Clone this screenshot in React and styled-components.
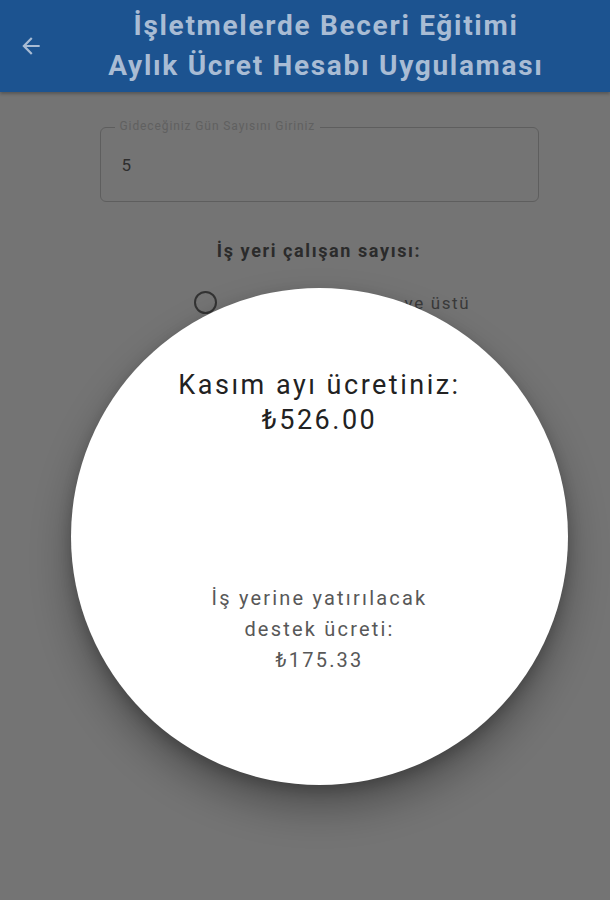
import React from "react";
import styled, { createGlobalStyle } from "styled-components";

const GlobalStyle = createGlobalStyle`
  html, body {
    margin: 0;
    padding: 0;
    background: #747474;
    font-family: Roboto, "Noto Sans", "DejaVu Sans", sans-serif;
  }
`;

const Screen = styled.div`
  position: relative;
  width: 610px;
  height: 900px;
  overflow: hidden;
  background: #747474;
`;

const AppBar = styled.header`
  display: flex;
  align-items: center;
  height: 92px;
  background: #1c5390;
  box-shadow: 0 2px 3px rgba(0, 0, 0, 0.25);
`;

const BackButton = styled.div`
  width: 56px;
  display: flex;
  justify-content: center;
  padding-left: 6px;
  box-sizing: border-box;
`;

const Title = styled.h1`
  flex: 1;
  margin: 0 14px 0 0;
  text-align: center;
  color: #a9bcd4;
  font-size: 28px;
  font-weight: 700;
  letter-spacing: 1.7px;
  line-height: 40px;
`;

const Form = styled.main`
  display: flex;
  flex-direction: column;
  align-items: center;
  padding-top: 35px;
  padding-left: 28px;
`;

const Field = styled.div`
  position: relative;
  width: 439px;
  height: 75px;
  box-sizing: border-box;
  border: 1.5px solid #5e5e5e;
  border-radius: 6px;
  display: flex;
  align-items: center;
  padding-left: 21px;
  color: #2e2e2e;
  font-size: 17px;
`;

const FieldLabel = styled.span`
  position: absolute;
  top: -9px;
  left: 14px;
  padding: 0 5px;
  background: #747474;
  color: #606060;
  font-size: 12px;
  letter-spacing: 0.9px;
  line-height: 15px;
`;

const Question = styled.p`
  margin: 38px 0 0;
  color: #2b2b2b;
  font-size: 18px;
  font-weight: 700;
  letter-spacing: 1.6px;
`;

const RadioRow = styled.label`
  display: flex;
  align-items: center;
  gap: 64px;
  margin-top: 30px;
  margin-left: 26px;
  color: #3a3a3a;
  font-size: 17px;
  letter-spacing: 1.6px;
`;

const RadioDot = styled.span`
  width: 19px;
  height: 19px;
  border: 2px solid #333;
  border-radius: 50%;
`;

const Bubble = styled.div`
  position: absolute;
  left: 71px;
  top: 288px;
  width: 497px;
  height: 497px;
  border-radius: 50%;
  background: #ffffff;
  box-shadow: 0 22px 40px rgba(0, 0, 0, 0.32), 0 6px 14px rgba(0, 0, 0, 0.2);
  display: flex;
  flex-direction: column;
  align-items: center;
  padding-top: 80px;
  box-sizing: border-box;
  text-align: center;
`;

const Amount = styled.div`
  color: #222;
  font-size: 27px;
  letter-spacing: 2.5px;
  line-height: 35px;
`;

const Support = styled.div`
  margin-top: 145px;
  color: #585858;
  font-size: 20px;
  letter-spacing: 2.2px;
  line-height: 31px;
`;

function BackArrow() {
  return (
    <svg width="26" height="26" viewBox="0 0 24 24" fill="#a9bcd4">
      <path d="M20 11H7.83l5.59-5.59L12 4l-8 8 8 8 1.41-1.41L7.83 13H20v-2z" />
    </svg>
  );
}

export default function App() {
  return (
    <>
      <GlobalStyle />
      <Screen>
        <AppBar>
          <BackButton>
            <BackArrow />
          </BackButton>
          <Title>
            İşletmelerde Beceri Eğitimi
            <br />
            Aylık Ücret Hesabı Uygulaması
          </Title>
        </AppBar>
        <Form>
          <Field>
            <FieldLabel>Gideceğiniz Gün Sayısını Giriniz</FieldLabel>
            5
          </Field>
          <Question>İş yeri çalışan sayısı:</Question>
          <RadioRow>
            <RadioDot />
            Yirmi çalışan ve üstü
          </RadioRow>
        </Form>
        <Bubble>
          <Amount>
            Kasım ayı ücretiniz:
            <br />
            ₺526.00
          </Amount>
          <Support>
            İş yerine yatırılacak
            <br />
            destek ücreti:
            <br />
            ₺175.33
          </Support>
        </Bubble>
      </Screen>
    </>
  );
}
